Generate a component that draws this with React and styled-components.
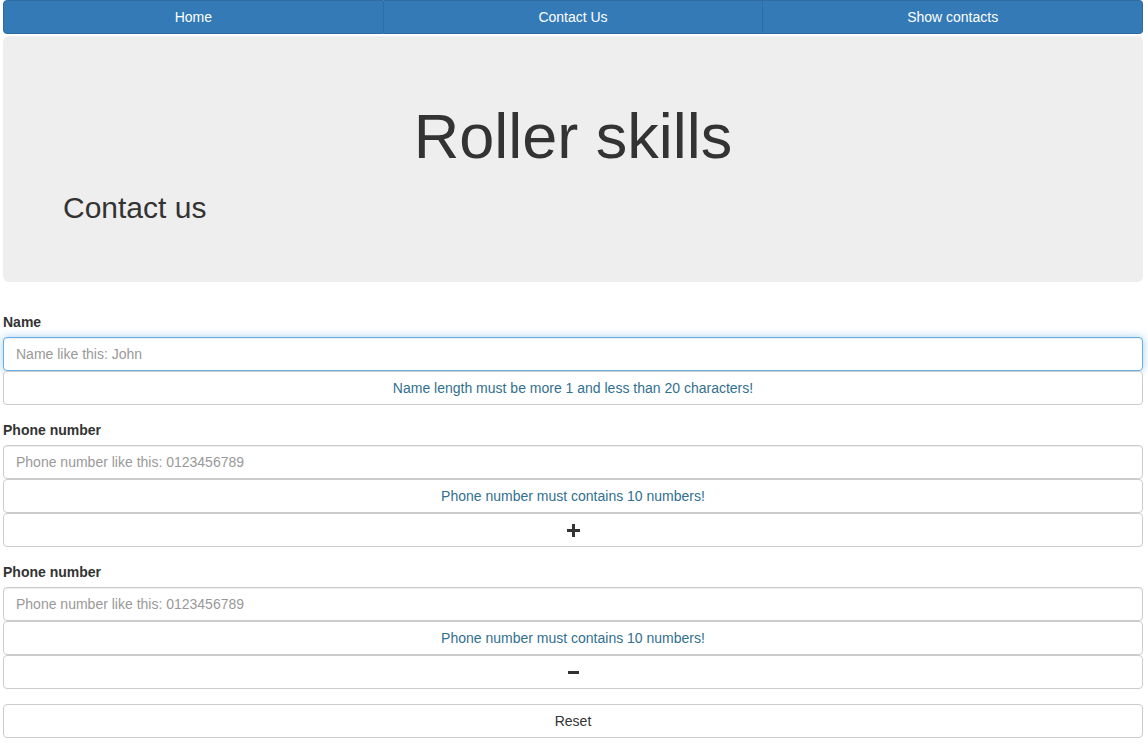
import React from 'react'
import styled, { createGlobalStyle } from 'styled-components';

const GlobalStyle = createGlobalStyle`
  * { box-sizing: border-box; }
  body {
    margin: 0;
    background: #fff;
    font-family: "Liberation Sans", Arial, Helvetica, sans-serif;
    font-size: 14px;
    line-height: 1.42857;
    color: #333;
  }
`;

const Page = styled.div`
  width: 1140px;
  margin-left: 3px;
  display: flex;
  flex-direction: column;
`;

const Nav = styled.nav`
  display: flex;
  height: 34px;
  margin-bottom: 2px;
`;

const NavButton = styled.a`
  flex: 1;
  display: flex;
  align-items: center;
  justify-content: center;
  padding-top: 1px;
  background: #337ab7;
  border: 1px solid #2e6da4;
  border-left-width: ${p => (p.$first ? '1px' : '0')};
  border-radius: ${p => (p.$first ? '4px 0 0 4px' : p.$last ? '0 4px 4px 0' : '0')};
  color: #fff;
  font-size: 14px;
  text-decoration: none;
  cursor: pointer;
`;

const Jumbotron = styled.div`
  background: #eee;
  border-radius: 6px;
  padding: 48px 60px;
  margin-bottom: 30px;
`;

const Title = styled.h1`
  margin: 18px 0 20px;
  font-size: 63px;
  font-weight: 500;
  line-height: 1.1;
  text-align: center;
  color: #333;
`;

const Subtitle = styled.h2`
  margin: 0 0 10px;
  font-size: 30px;
  font-weight: 500;
  line-height: 1.1;
  color: #333;
`;

const Form = styled.form`
  display: flex;
  flex-direction: column;
`;

const Group = styled.div`
  display: flex;
  flex-direction: column;
  margin-bottom: 15px;
`;

const Label = styled.label`
  font-weight: 700;
  margin-bottom: 5px;
  line-height: 20px;
`;

const Input = styled.input`
  height: 34px;
  width: 100%;
  padding: 6px 12px;
  font-family: inherit;
  font-size: 14px;
  color: #555;
  background: #fff;
  border: 1px solid ${p => (p.$focus ? '#66afe9' : '#ccc')};
  border-radius: 4px;
  outline: none;
  box-shadow: ${p => (p.$focus
    ? 'inset 0 1px 1px rgba(0,0,0,.075), 0 0 8px rgba(102,175,233,.6)'
    : 'inset 0 1px 1px rgba(0,0,0,.075)')};
  &::placeholder { color: #999; }
`;

const Hint = styled.div`
  height: 34px;
  display: flex;
  align-items: center;
  justify-content: center;
  padding-top: 2px;
  border: 1px solid #ccc;
  border-radius: 4px;
  color: #31708f;
  font-size: 14px;
  background: #fff;
`;

const Button = styled.button`
  height: 34px;
  width: 100%;
  display: flex;
  align-items: center;
  justify-content: center;
  border: 1px solid #ccc;
  border-radius: 4px;
  background: #fff;
  color: #333;
  font-family: inherit;
  font-size: 14px;
  cursor: pointer;
`;

const Plus = () => (
  <svg width="13" height="13" viewBox="0 0 13 13">
    <rect x="5" y="0" width="3" height="13" fill="#333" />
    <rect x="0" y="5" width="13" height="3" fill="#333" />
  </svg>
);

const Minus = () => (
  <svg width="11" height="3" viewBox="0 0 11 3">
    <rect x="0" y="0" width="11" height="3" fill="#333" />
  </svg>
);

const PhoneGroup = ({ removable }) => (
  <Group>
    <Label>Phone number</Label>
    <Input placeholder="Phone number like this: 0123456789" />
    <Hint>Phone number must contains 10 numbers!</Hint>
    <Button type="button">{removable ? <Minus /> : <Plus />}</Button>
  </Group>
);

const App = () => {
  return (
    <>
      <GlobalStyle />
      <Page>
        <Nav>
          <NavButton $first>Home</NavButton>
          <NavButton>Contact Us</NavButton>
          <NavButton $last>Show contacts</NavButton>
        </Nav>
        <Jumbotron>
          <Title>Roller skills</Title>
          <Subtitle>Contact us</Subtitle>
        </Jumbotron>
        <Form>
          <Group>
            <Label>Name</Label>
            <Input $focus placeholder="Name like this: John" />
            <Hint>Name length must be more 1 and less than 20 characters!</Hint>
          </Group>
          <PhoneGroup />
          <PhoneGroup removable />
          <Button type="reset">Reset</Button>
        </Form>
      </Page>
    </>
  )
}

export default App
